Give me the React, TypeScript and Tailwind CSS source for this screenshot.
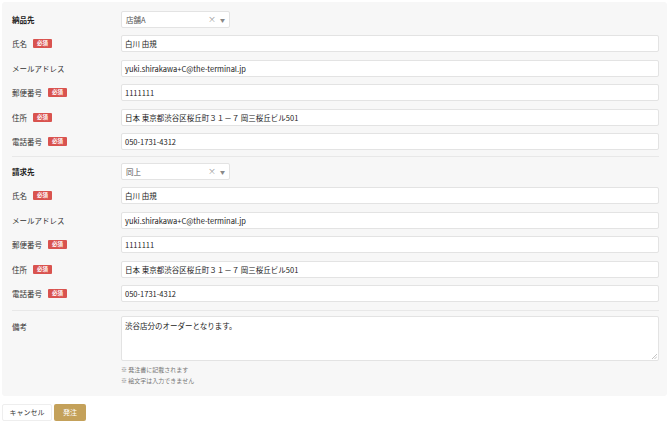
const F = { fontFamily: '"Noto Sans CJK JP","Noto Sans",sans-serif' };

function Req() {
  return <span className="ml-[6px] inline-flex h-[9px] items-center rounded-[1px] bg-[#d9534f] px-[4px] text-[5.5px] font-bold leading-none text-white">必須</span>;
}

function Row({ label, req, value }: { label: string; req?: boolean; value: string }) {
  return (
    <div className="flex h-[24.5px] items-center">
      <div className="flex w-[109px] items-center text-[7.5px] text-[#333]">{label}{req && <Req />}</div>
      <div className="flex h-[17px] flex-1 items-center rounded-[2px] border border-[#e3e3e3] bg-white px-[3px] text-[7.5px] text-[#222]">{value}</div>
    </div>
  );
}

function Sel({ label, value }: { label: string; value: string }) {
  return (
    <div className="flex h-[24.5px] items-center">
      <div className="w-[109px] text-[7.5px] font-bold text-[#222]">{label}</div>
      <div className="flex h-[17px] w-[109px] items-center rounded-[2px] border border-[#e3e3e3] bg-white px-[4px] text-[7.5px] text-[#555]">
        <span className="flex-1">{value}</span>
        <span className="text-[8px] text-[#999]">×</span>
        <span className="ml-[4px] text-[5px] text-[#888]">▼</span>
      </div>
    </div>
  );
}

function Section({ title, sel }: { title: string; sel: string }) {
  return (
    <div>
      <Sel label={title} value={sel} />
      <Row label="氏名" req value="白川 由規" />
      <Row label="メールアドレス" value="yuki.shirakawa+C@the-terminal.jp" />
      <Row label="郵便番号" req value="1111111" />
      <Row label="住所" req value="日本 東京都渋谷区桜丘町３１－７ 岡三桜丘ビル501" />
      <Row label="電話番号" req value="050-1731-4312" />
    </div>
  );
}

export default function App() {
  return (
    <div className="h-[425px] w-[670px] bg-white pt-[2px]" style={F}>
      <div className="mx-[2px] h-[394px] w-[665px] rounded-[3px] bg-[#f7f7f7] pl-[10px] pr-[8px] pt-[5px]">
        <Section title="納品先" sel="店舗A" />
        <div className="my-[2px] h-px bg-[#e8e8e8]" />
        <Section title="請求先" sel="同上" />
        <div className="mt-[4px] h-px bg-[#e8e8e8]" />
        <div className="flex pt-[5px]">
          <div className="w-[109px] pt-[5px] text-[7.5px] text-[#333]">備考</div>
          <div className="flex-1">
            <div className="relative h-[45px] rounded-[2px] border border-[#e3e3e3] bg-white px-[3px] pt-[3px] text-[7.5px] text-[#222]">
              渋谷店分のオーダーとなります。
              <svg className="absolute bottom-[1px] right-[1px]" width="5" height="5" viewBox="0 0 5 5"><path d="M5 0L0 5M5 2.5L2.5 5" stroke="#aaa" strokeWidth="0.7" /></svg>
            </div>
            <div className="mt-[3px] text-[6px] leading-[11px] text-[#777]">※ 発注書に記載されます</div>
            <div className="text-[6px] leading-[11px] text-[#777]">※ 絵文字は入力できません</div>
          </div>
        </div>
      </div>
      <div className="ml-[2px] mt-[8px] flex gap-[2px]">
        <button className="h-[17px] w-[50px] rounded-[2px] border border-[#eeeeee] bg-white text-[7px] text-[#333]">キャンセル</button>
        <button className="h-[17px] w-[32px] rounded-[2px] bg-[#c4a15a] text-[7px] text-white">発注</button>
      </div>
    </div>
  );
}
